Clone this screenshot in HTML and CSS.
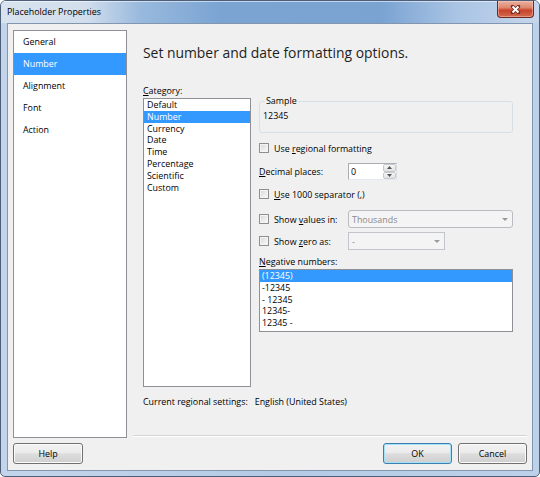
FILE: index.html
```html
<!DOCTYPE html>
<html>
<head>
<meta charset="utf-8">
<title>Placeholder Properties</title>
<link rel="stylesheet" href="styles.css">
</head>
<body>
<div class="window">
  <div class="titlebar">
    <span class="title">Placeholder Properties</span>
    <div class="close">
      <svg width="11" height="9" viewBox="0 0 11 9"><path d="M2.5 1.5L8.5 7.5M8.5 1.5L2.5 7.5" stroke="#6a2a20" stroke-width="3.4" stroke-linecap="round"/><path d="M2.5 1.5L8.5 7.5M8.5 1.5L2.5 7.5" stroke="#fff" stroke-width="1.9"/></svg>
    </div>
  </div>
  <div class="client">
    <div class="main">
      <ul class="nav">
        <li>General</li>
        <li class="sel">Number</li>
        <li>Alignment</li>
        <li>Font</li>
        <li>Action</li>
      </ul>
      <div class="pane">
        <h1 class="heading">Set number and date formatting options.</h1>
        <div class="body">
          <div class="cat-col">
            <div class="label"><u>C</u>ategory:</div>
            <ul class="list cat-list">
              <li>Default</li>
              <li class="sel">Number</li>
              <li>Currency</li>
              <li>Date</li>
              <li>Time</li>
              <li>Percentage</li>
              <li>Scientific</li>
              <li>Custom</li>
            </ul>
          </div>
          <div class="opts">
            <fieldset class="sample">
              <legend>Sample</legend>
              <div class="sample-value">12345</div>
            </fieldset>
            <div class="row row-regional"><span class="cb"></span><span>Use <u>r</u>egional formatting</span></div>
            <div class="row row-decimal">
              <span class="lbl"><u>D</u>ecimal places:</span>
              <div class="spin">
                <span class="spin-text">0</span>
                <div class="spin-btns">
                  <span class="spin-btn"><svg width="5" height="3" viewBox="0 0 5 3"><path d="M0 3L2.5 0L5 3Z" fill="#555"/></svg></span>
                  <span class="spin-btn"><svg width="5" height="3" viewBox="0 0 5 3"><path d="M0 0L5 0L2.5 3Z" fill="#555"/></svg></span>
                </div>
              </div>
            </div>
            <div class="row row-sep"><span class="cb"></span><span><u>U</u>se 1000 separator (,)</span></div>
            <div class="row row-values">
              <span class="lbl"><span class="cb"></span><span>Show <u>v</u>alues in:</span></span>
              <div class="combo combo-values">
                <span class="combo-text">Thousands</span>
                <svg width="6" height="3" viewBox="0 0 6 3"><path d="M0 0H6L3 3Z" fill="#9a9a9a"/></svg>
              </div>
            </div>
            <div class="row row-zero">
              <span class="lbl"><span class="cb"></span><span>Show <u>z</u>ero as:</span></span>
              <div class="combo combo-zero">
                <span class="combo-text">-</span>
                <span class="combo-btn"><svg width="6" height="3" viewBox="0 0 6 3"><path d="M0 0H6L3 3Z" fill="#9a9a9a"/></svg></span>
              </div>
            </div>
            <div class="label neg-label"><u>N</u>egative numbers:</div>
            <ul class="list neg-list">
              <li class="sel">(12345)</li>
              <li>-12345</li>
              <li>- 12345</li>
              <li>12345-</li>
              <li>12345 -</li>
            </ul>
          </div>
        </div>
        <div class="regional">Current regional settings:<span class="regional-value">English (United States)</span></div>
      </div>
    </div>
    <div class="footer">
      <button class="btn btn-help">Help</button>
      <span class="spacer"></span>
      <button class="btn btn-ok">OK</button>
      <button class="btn btn-cancel">Cancel</button>
    </div>
  </div>
</div>
</body>
</html>
```

FILE: styles.css
```css
html, body {
  margin: 0;
  padding: 0;
  background: #ffffff;
}

.window {
  width: 540px;
  height: 477px;
  box-sizing: border-box;
  border: 1px solid #4d5f78;
  border-radius: 6px 6px 5px 5px;
  background: linear-gradient(to right, #c3d5ea 0, #b5cbe5 50%, #bdd1e9 100%);
  display: flex;
  flex-direction: column;
  overflow: hidden;
  font-family: "Open Sans", "Noto Sans", sans-serif;
  font-size: 8.9px;
  color: #000;
}

.titlebar {
  height: 22px;
  flex: none;
  display: flex;
  align-items: flex-start;
  background: linear-gradient(to right, #d9e3ef 0, #d2deed 85px, #98b9dd 140px, #7ba4d3 220px, #7aa3d2 380px, #a9c4e4 455px, #c6d7ec 539px);
  box-shadow: inset 0 1px 0 rgba(255,255,255,0.55);
}

.title {
  padding-left: 6px;
  line-height: 22px;
  font-size: 8.9px;
  color: #000;
}

.close {
  margin-left: auto;
  margin-right: 5px;
  width: 37px;
  height: 17px;
  box-sizing: border-box;
  border: 1px solid #6b2a22;
  border-top: none;
  border-radius: 0 0 4px 4px;
  background: linear-gradient(#ebb0a1 0%, #df8a70 40%, #c8442a 58%, #d26a4f 100%);
  box-shadow: inset 0 0 0 1px rgba(255,210,200,0.45);
  display: flex;
  align-items: center;
  justify-content: center;
}

.close svg {
  display: block;
}

.client {
  flex: 1;
  margin: 0 6px 5px;
  border: 1px solid #8396b0;
  background: #f0f0f0;
  display: flex;
  flex-direction: column;
  padding: 6px 5px;
  min-height: 0;
}

.main {
  display: flex;
  height: 408px;
  flex: none;
}

.nav {
  width: 114px;
  flex: none;
  box-sizing: border-box;
  border: 1px solid #8e9096;
  background: #fff;
  margin: 0;
  padding: 0;
  list-style: none;
}

.nav li {
  height: 22px;
  line-height: 22px;
  padding-left: 9px;
}

.sel {
  background: #3399ff;
  color: #fff;
}

.pane {
  flex: 1;
  margin-left: 6px;
  margin-bottom: 2px;
  border-bottom: 1px solid #d5d5d5;
  box-shadow: 0 1px 0 #ffffff;
  padding: 15px 0 0 10px;
  box-sizing: border-box;
  display: flex;
  flex-direction: column;
}

.heading {
  margin: 0;
  font-size: 13.9px;
  font-weight: 400;
  line-height: 16px;
  color: #1e1e1e;
  white-space: nowrap;
}

.body {
  display: flex;
  margin-top: 23px;
}

.cat-col {
  width: 108px;
  flex: none;
}

.label {
  line-height: 13px;
}

.list {
  margin: 1px 0 0;
  padding: 0;
  list-style: none;
  box-sizing: border-box;
  border: 1px solid #8e9096;
  background: #fff;
}

.list li {
  height: 11.8px;
  line-height: 11.8px;
  white-space: nowrap;
}

.cat-list {
  height: 289px;
}

.cat-list li {
  padding-left: 3px;
}

.opts {
  width: 254px;
  flex: none;
  margin-left: 8px;
  display: flex;
  flex-direction: column;
}

.sample {
  margin: 11px 0 0;
  padding: 3px 3px 10px;
  border: 1px solid #d5dfe5;
  border-radius: 3px;
  min-width: 0;
}

.sample legend {
  padding: 0 1px;
  margin-left: 2px;
  line-height: 12px;
}

.sample-value {
  line-height: 12px;
}

.row {
  display: flex;
  align-items: center;
}

.row-regional {
  margin-top: 9px;
  height: 12px;
}

.row-decimal {
  margin-top: 9px;
  height: 17px;
}

.row-sep {
  margin-top: 8px;
  height: 12px;
}

.row-values {
  margin-top: 10px;
  height: 18px;
}

.row-zero {
  margin-top: 4px;
  height: 18px;
}

.cb {
  width: 10px;
  height: 10px;
  flex: none;
  box-sizing: border-box;
  border: 1px solid #8f8f8f;
  background: linear-gradient(135deg, #d6d6d6 0%, #ececec 55%, #fbfbfb 100%);
  box-shadow: inset 0 0 0 1px #f4f4f4;
  margin-right: 5px;
}

.lbl {
  width: 89px;
  flex: none;
  display: flex;
  align-items: center;
  white-space: nowrap;
}

.spin {
  width: 49px;
  height: 17px;
  box-sizing: border-box;
  border: 1px solid #abadb3;
  border-right-color: #dbdfe6;
  border-bottom-color: #e3e9ef;
  background: #fff;
  display: flex;
  align-items: center;
}

.spin-text {
  flex: 1;
  padding-left: 2px;
}

.spin-btns {
  width: 13px;
  height: 15px;
  display: flex;
  flex-direction: column;
}

.spin-btn {
  flex: 1;
  box-sizing: border-box;
  border: 1px solid #c7c9cd;
  border-radius: 2px;
  background: linear-gradient(#f7f7f7, #e2e2e2);
  display: flex;
  align-items: center;
  justify-content: center;
}

.spin-btn svg {
  display: block;
}

.combo {
  height: 18px;
  box-sizing: border-box;
  border: 1px solid #b8bcc0;
  background: #f4f4f4;
  display: flex;
  align-items: center;
  color: #8a8a8a;
}

.combo-values {
  width: 165px;
  border-radius: 3px;
  padding: 0 4px 0 3px;
}

.combo-values .combo-text {
  flex: 1;
}

.combo-zero {
  width: 97px;
  padding-left: 3px;
  border-color: #c2c5c9;
}

.combo-zero .combo-text {
  flex: 1;
}

.combo-btn {
  width: 12px;
  height: 16px;
  display: flex;
  align-items: center;
  justify-content: center;
  margin-right: 1px;
}

.combo svg {
  display: block;
}

.neg-label {
  margin-top: 6px;
  line-height: 12px;
}

.neg-list {
  height: 63px;
}

.neg-list li {
  padding-left: 2px;
}

.regional {
  margin-top: 9px;
  line-height: 12px;
  white-space: nowrap;
}

.regional-value {
  margin-left: 7px;
}

.footer {
  display: flex;
  margin-top: 5px;
  height: 21px;
  flex: none;
}

.spacer {
  flex: 1;
}

.btn {
  box-sizing: border-box;
  height: 21px;
  padding: 0;
  border: 1px solid #707070;
  border-radius: 3px;
  background: linear-gradient(#f3f3f3 0%, #ebebeb 45%, #dddddd 52%, #cfcfcf 100%);
  box-shadow: inset 0 0 0 1px #fbfbfb;
  font: inherit;
  color: #000;
  line-height: 19px;
  text-align: center;
}

.btn-help {
  width: 70px;
}

.btn-ok {
  width: 69px;
  border-color: #3c7fb1;
  box-shadow: inset 0 0 0 1px #a4e0f8;
}

.btn-cancel {
  width: 69px;
  margin-left: 6px;
}
```
